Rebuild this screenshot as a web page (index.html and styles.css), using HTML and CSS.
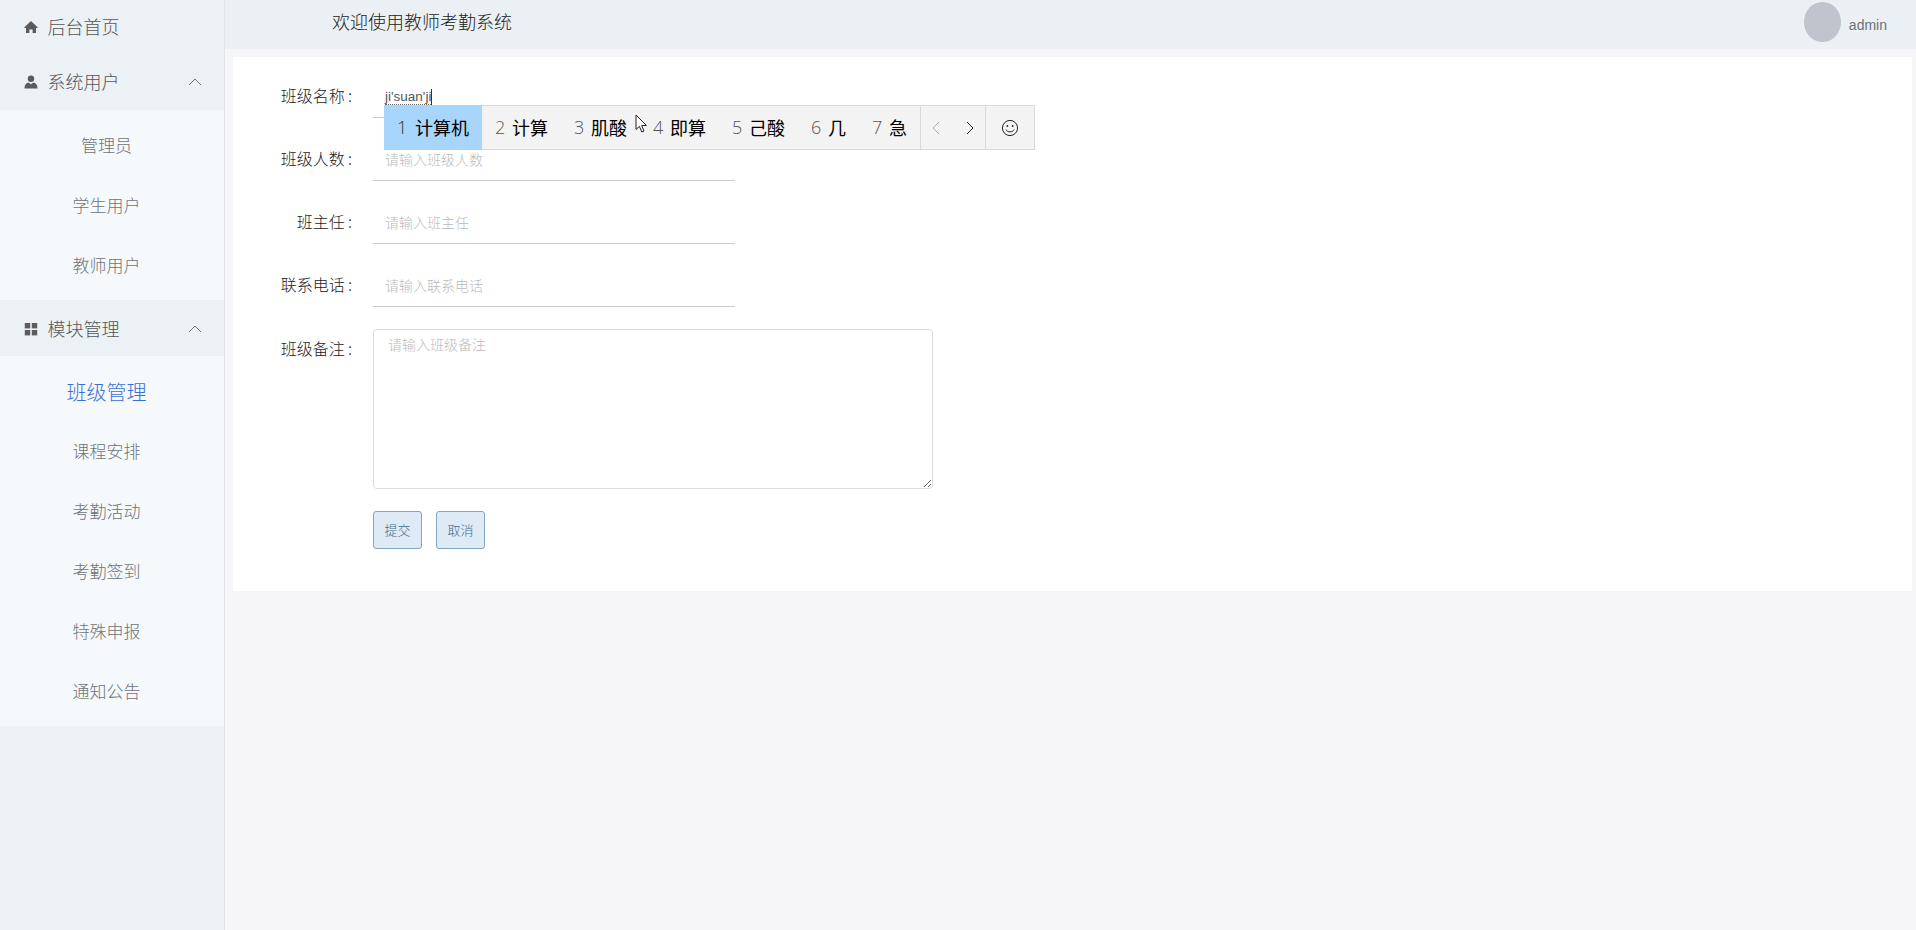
FILE: index.html
```html
<!DOCTYPE html>
<html lang="zh-CN">
<head>
<meta charset="utf-8">
<title>教师考勤系统</title>
<link rel="stylesheet" href="styles.css">
</head>
<body>
<div class="app">
  <aside class="sidebar">
    <div class="menu-head first">
      <svg class="menu-icon" viewBox="0 0 14 14"><path d="M7 1 L13.6 7.2 L13.6 8 L12 8 L12 13 L8.6 13 L8.6 9.4 L5.4 9.4 L5.4 13 L2 13 L2 8 L.4 8 L.4 7.2 Z"/></svg>
      <span class="menu-title">后台首页</span>
    </div>
    <div class="menu-head second">
      <svg class="menu-icon" viewBox="0 0 14 14"><circle cx="7" cy="3.8" r="3.2"/><path d="M.4 13.4 C.6 9.6 2.6 7.8 4.6 7.6 L7 9.2 L9.4 7.6 C11.4 7.8 13.4 9.6 13.6 13.4 Z"/></svg>
      <span class="menu-title">系统用户</span>
      <svg class="chevron" viewBox="0 0 14 8"><path d="M1 7 L7 1 L13 7"/></svg>
    </div>
    <ul class="submenu">
      <li class="sub-item">管理员</li>
      <li class="sub-item">学生用户</li>
      <li class="sub-item">教师用户</li>
    </ul>
    <div class="menu-head">
      <svg class="menu-icon" viewBox="0 0 14 14"><rect x=".8" y="1" width="5.4" height="5.4"/><rect x="7.8" y="1" width="5.4" height="5.4"/><rect x=".8" y="8" width="5.4" height="5.4"/><rect x="7.8" y="8" width="5.4" height="5.4"/></svg>
      <span class="menu-title">模块管理</span>
      <svg class="chevron" viewBox="0 0 14 8"><path d="M1 7 L7 1 L13 7"/></svg>
    </div>
    <ul class="submenu">
      <li class="sub-item active">班级管理</li>
      <li class="sub-item">课程安排</li>
      <li class="sub-item">考勤活动</li>
      <li class="sub-item">考勤签到</li>
      <li class="sub-item">特殊申报</li>
      <li class="sub-item">通知公告</li>
    </ul>
  </aside>
  <div class="main">
    <header class="topbar">
      <h1 class="welcome">欢迎使用教师考勤系统</h1>
      <div class="user">
        <span class="avatar"></span>
        <span class="username">admin</span>
      </div>
    </header>
    <div class="content">
      <form class="card">
        <div class="row">
          <label class="label">班级名称&#8201;:</label>
          <div class="input composing"><span class="comp-text">ji'suan'ji</span><span class="caret"></span></div>
        </div>
        <div class="row">
          <label class="label">班级人数&#8201;:</label>
          <input class="input" placeholder="请输入班级人数">
        </div>
        <div class="row">
          <label class="label">班主任&#8201;:</label>
          <input class="input" placeholder="请输入班主任">
        </div>
        <div class="row">
          <label class="label">联系电话&#8201;:</label>
          <input class="input" placeholder="请输入联系电话">
        </div>
        <div class="row">
          <label class="label">班级备注&#8201;:</label>
          <textarea class="textarea" placeholder="请输入班级备注"></textarea>
        </div>
        <div class="actions">
          <button type="button" class="btn">提交</button>
          <button type="button" class="btn">取消</button>
        </div>
      </form>
    </div>
  </div>
</div>

<div class="ime">
  <div class="cand selected"><span class="num">1</span><span class="word">计算机</span></div>
  <div class="cand"><span class="num">2</span><span class="word">计算</span></div>
  <div class="cand"><span class="num">3</span><span class="word">肌酸</span></div>
  <div class="cand"><span class="num">4</span><span class="word">即算</span></div>
  <div class="cand"><span class="num">5</span><span class="word">己酸</span></div>
  <div class="cand"><span class="num">6</span><span class="word">几</span></div>
  <div class="cand"><span class="num">7</span><span class="word">急</span></div>
  <div class="ime-nav">
    <svg class="ime-arrow off" viewBox="0 0 8 14"><path d="M7 1 L1 7 L7 13"/></svg>
    <svg class="ime-arrow" viewBox="0 0 8 14"><path d="M1 1 L7 7 L1 13"/></svg>
  </div>
  <div class="ime-emoji">
    <svg class="smile" viewBox="0 0 18 18"><circle cx="9" cy="9" r="7.6"/><circle class="eye" cx="6.4" cy="7" r=".9"/><circle class="eye" cx="11.6" cy="7" r=".9"/><path d="M5 10.6 C6.2 13.6 11.8 13.6 13 10.6"/></svg>
  </div>
</div>
<svg class="mouse" viewBox="0 0 13 20"><path d="M1 1 L1 15.5 L4.4 12.4 L6.8 18 L9 17 L6.6 11.6 L11.4 11.4 Z"/></svg>
</body>
</html>
```
FILE: styles.css
```css
* { box-sizing: border-box; }
html, body { margin: 0; height: 100%; }
body {
  font-family: "Noto Sans CJK SC", "Liberation Sans", sans-serif;
  background: #f6f6f9;
  color: #333;
  overflow: hidden;
}
.app { display: flex; height: 930px; }

.sidebar {
  flex: 0 0 225px;
  background: #ecf1f5;
  border-right: 1px solid #e0e4e8;
}
.menu-head {
  display: flex;
  align-items: center;
  height: 56px;
  padding: 0 22px 0 24px;
  color: #666;
}
.menu-head.first { height: 52px; }
.menu-head.second { height: 58px; }
.menu-icon { width: 14px; height: 14px; fill: #5c5c5c; flex: none; margin-top: 2px; }
.menu-title { margin-left: 9.5px; font-size: 18px; font-weight: 300; color: #555; }
.chevron {
  width: 14px; height: 8px; margin-left: auto; margin-top: 2px;
  fill: none; stroke: #777; stroke-width: 1;
}
.submenu { list-style: none; margin: 0; padding: 5px 0; background: #f5f9fc; }
.sub-item {
  height: 60px;
  display: flex;
  align-items: center;
  justify-content: center;
  padding: 0 11px 2px 0;
  font-size: 17px;
  font-weight: 300;
  color: #6f7378;
}
.sub-item.active { font-size: 20px; color: #3b6fd6; padding-bottom: 0; }

.main { flex: 1; display: flex; flex-direction: column; min-width: 0; }
.topbar {
  flex: 0 0 49px;
  display: flex;
  align-items: center;
  justify-content: space-between;
  background: #ebf0f5;
  padding: 0 29px 0 107px;
}
.welcome { margin: 0; padding-bottom: 8px; font-size: 18px; font-weight: 300; color: #222; }
.user { display: flex; align-items: center; gap: 8px; padding-bottom: 5px; }
.avatar { width: 37px; height: 40px; border-radius: 50%; background: #c0c4cc; }
.username { font: 14px "Liberation Sans", sans-serif; color: #6c7078; padding-top: 5px; }

.content { flex: 1; padding: 8px 4px 0 8px; background: #f6f6f9; }
.card { background: #fff; padding: 19px 0 42px; }
.row { display: flex; margin-bottom: 21px; }
.label {
  flex: 0 0 140px;
  height: 40px;
  line-height: 38px;
  text-align: right;
  padding-right: 21px;
  font-size: 16px;
  font-weight: 300;
  color: #222;
}
.input {
  width: 362px;
  height: 42px;
  border: 0;
  border-bottom: 1px solid #ccc;
  padding: 0 12px 2px;
  background: #fff;
  outline: none;
  font: 300 14px "Noto Sans CJK SC", "Liberation Sans", sans-serif;
}
.input::placeholder, .textarea::placeholder { color: #bbb; opacity: 1; }
.composing { display: flex; align-items: center; padding-bottom: 0; }
.comp-text {
  font: 13.5px "Liberation Sans", sans-serif;
  color: #555;
  line-height: 15px;
  border-bottom: 1px dotted #666;
}
.caret { width: 1px; height: 16px; background: #333; }
.row:nth-child(4) { margin-bottom: 22px; }
.textarea {
  display: block;
  width: 560px;
  height: 160px;
  border: 1px solid #ddd;
  border-radius: 4px;
  padding: 4px 14px;
  outline: none;
  font: 300 14px/20px "Noto Sans CJK SC", "Liberation Sans", sans-serif;
}
.row:nth-child(5) { margin-bottom: 22px; }
.actions { display: flex; gap: 14px; padding-left: 140px; }
.btn {
  width: 49px;
  height: 38px;
  padding: 0 0 1px;
  background: #deeaf5;
  border: 1px solid #84a5bd;
  border-radius: 3px;
  color: #3f6a8a;
  font: 300 13px "Noto Sans CJK SC", sans-serif;
}

.ime {
  position: absolute;
  left: 384px;
  top: 105px;
  width: 651px;
  height: 45px;
  display: flex;
  background: #f3f3f3;
  border: 1px solid #d9d9d9;
  font-size: 18px;
  color: #111;
}
.cand {
  display: flex;
  align-items: center;
  padding: 0 13px 1px;
  white-space: nowrap;
}
.cand.selected { background: #a7d5fc; margin: -1px 0 -1px -1px; padding: 0 12px 1px 13px; width: 98px; }
.num { width: 9px; margin-right: 8px; font: 18px "Open Sans", "Liberation Sans", sans-serif; font-weight: 300; color: #555; }
.cand.selected .num { width: 10px; color: #333; }
.word { font-weight: 400; color: #000; }
.ime-nav {
  position: absolute;
  left: 535px;
  top: 0;
  width: 66px;
  height: 43px;
  display: flex;
  align-items: center;
  justify-content: space-between;
  padding: 0 11px 0 11px;
  border-left: 1px solid #d9d9d9;
  border-right: 1px solid #d9d9d9;
}
.ime-arrow { width: 8px; height: 14px; fill: none; stroke: #222; stroke-width: 1; }
.ime-arrow.off { stroke: #aaa; }
.ime-emoji {
  position: absolute;
  left: 601px;
  top: 0;
  width: 48px;
  height: 43px;
  display: flex;
  align-items: center;
  justify-content: center;
}
.smile { width: 18px; height: 18px; fill: none; stroke: #222; stroke-width: 1; }
.eye { fill: #222; stroke: none; }
.mouse {
  position: absolute;
  left: 635px;
  top: 114px;
  width: 13px;
  height: 20px;
  fill: #fff;
  stroke: #222;
  stroke-width: 1;
}
```
